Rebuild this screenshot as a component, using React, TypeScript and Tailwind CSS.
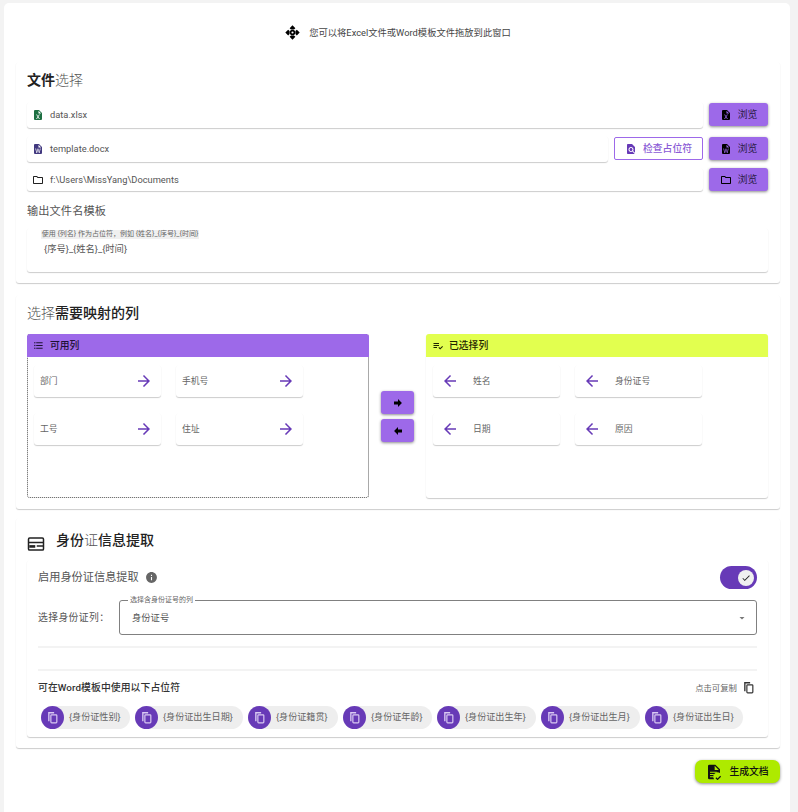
import React from 'react'
import {
  MdArrowBack,
  MdArrowForward,
  MdArrowDropDown,
  MdCheck,
  MdFindInPage,
  MdFormatListBulleted,
  MdInfo,
  MdOutlineFolder,
  MdPlaylistAddCheck,
} from 'react-icons/md'

const EXCEL =
  'M14,2H6A2,2 0 0,0 4,4V20A2,2 0 0,0 6,22H18A2,2 0 0,0 20,20V8L14,2M15.8,20H14L12,16.6L10,20H8.2L11.1,15.5L8.2,11H10L12,14.4L14,11H15.8L12.9,15.5L15.8,20M13,9V3.5L18.5,9H13Z'
const WORD =
  'M14,2H6A2,2 0 0,0 4,4V20A2,2 0 0,0 6,22H18A2,2 0 0,0 20,20V8L14,2M15.2,20H13.8L12,13.2L10.2,20H8.8L6.6,11H8.1L9.5,17.8L11.3,11H12.6L14.4,17.8L15.8,11H17.3L15.2,20M13,9V3.5L18.5,9H13Z'

const MdiIcon: React.FC<{ d: string; className?: string }> = ({ d, className }) => (
  <svg viewBox="0 0 24 24" fill="currentColor" className={className}>
    <path d={d} />
  </svg>
)

const DragIcon: React.FC<{ className?: string }> = ({ className }) => (
  <svg viewBox="0 0 24 24" fill="currentColor" className={className}>
    <path d="M12 0.5l4.6 4.6-2.2 2.2h-4.8L7.4 5.1zM12 23.5l-4.6-4.6 2.2-2.2h4.8l2.2 2.2zM0.5 12l4.6-4.6 2.2 2.2v4.8l-2.2 2.2zM23.5 12l-4.6 4.6-2.2-2.2V9.600l2.2-2.200z" />
    <path
      fillRule="evenodd"
      d="M12 7.500a4.500 4.500 0 1 1 0 9 4.500 4.500 0 0 1 0-9m0 2.800a1.700 1.700 0 1 0 0 3.400 1.700 1.700 0 0 0 0-3.400"
    />
  </svg>
)

const CopyIcon: React.FC<{ className?: string }> = ({ className }) => (
  <svg viewBox="0 0 24 24" fill="none" className={className}>
    <path d="M4 2h11v2.500H6.500V19H4z" fill="currentColor" />
    <rect x="9" y="7" width="11" height="15" rx="1.500" stroke="currentColor" strokeWidth="2.200" />
  </svg>
)

const IdIcon: React.FC<{ className?: string }> = ({ className }) => (
  <svg viewBox="0 0 24 24" fill="none" className={className}>
    <rect x="2" y="4" width="20" height="16" rx="1.500" stroke="currentColor" strokeWidth="2" />
    <path d="M2 10h20M13 14.500h9" stroke="currentColor" strokeWidth="2" />
    <path d="M3 13.500h8v3.500H3z" fill="currentColor" />
  </svg>
)

const FileCheckIcon: React.FC<{ className?: string }> = ({ className }) => (
  <svg viewBox="0 0 24 24" fill="currentColor" className={className}>
    <path d="M5 1h9l7 7v5.500a6.500 6.500 0 0 0-8.600 9.500H5a2 2 0 0 1-2-2V3a2 2 0 0 1 2-2m8 1.800V9h6.200zM6 11.500V13h10v-1.500zm0 3.500v1.500h6V15zm0 3.500V20h5v-1.500z" />
    <path d="M15.500 20l1.800 1.800 4-4 1.300 1.300-5.300 5.300-3.100-3.100z" />
  </svg>
)

const BrowseButton: React.FC<{ icon: React.ReactNode; className?: string }> = ({ icon, className }) => (
  <button className={`flex h-[23px] w-[59px] shrink-0 items-center justify-center gap-[6px] rounded-[3px] bg-[#9d69e9] text-[9.8px] text-[#2a1a45] shadow-[0_1px_3px_rgba(0,0,0,0.45)] ${className ?? ''}`}>
    {icon}
    <span className="pt-[1px]">浏览</span>
  </button>
)

const FileRow: React.FC<{ icon: React.ReactNode; text: string; className: string }> = ({ icon, text, className }) => (
  <div className={`flex flex-1 items-center gap-[6px] rounded-[3px] pl-[5px] text-[9.3px] text-[#555] shadow-[0_1px_1px_rgba(0,0,0,0.2)] ${className}`}>
    {icon}
    <span>{text}</span>
  </div>
)

const ColumnItem: React.FC<{ name: string; side: 'left' | 'right' }> = ({ name, side }) => (
  <div className="flex h-[32px] w-[127px] items-center rounded-[3px] bg-white text-[8.8px] text-[#666] shadow-[0_1px_1px_rgba(0,0,0,0.2)]">
    {side === 'left' ? (
      <>
        <span className="ml-[6px] flex-1 pt-[1px]">{name}</span>
        <MdArrowForward className="mr-[8px] h-[18px] w-[18px] text-[#673ab7]" />
      </>
    ) : (
      <>
        <MdArrowBack className="ml-[8px] h-[18px] w-[18px] text-[#673ab7]" />
        <span className="ml-[14px] pt-[1px]">{name}</span>
      </>
    )}
  </div>
)

const Chip: React.FC<{ label: string; width: string }> = ({ label, width }) => (
  <div className={`flex h-[23px] items-center rounded-full bg-[#eeeeee] text-[9.1px] text-[#666] ${width}`}>
    <span className="flex h-[23px] w-[23px] shrink-0 items-center justify-center rounded-full bg-[#673ab7] text-[#d9c9f2]">
      <CopyIcon className="h-[13px] w-[13px]" />
    </span>
    <span className="ml-[5px] whitespace-nowrap">{label}</span>
  </div>
)

export default function App() {
  return (
    <div className="h-[812px] w-[798px] overflow-hidden bg-[#f3f3f3] pl-[4px] pt-[3px] font-['Roboto','Noto_Sans_CJK_SC',sans-serif]">
      <div className="h-[809px] w-[786px] rounded-t-[5px] bg-white pl-[12px] pr-[10px]">
        {/* Drop hint */}
        <div className="flex h-[59px] items-center justify-center text-[9.3px] text-[#444]">
          <DragIcon className="mr-[9px] h-[15px] w-[15px] text-black" />
          <span>您可以将Excel文件或Word模板文件拖放到此窗口</span>
        </div>

        {/* File selection */}
        <section className="h-[221px] rounded-[3px] bg-white px-[11px] pr-[12px] shadow-[0_1px_1px_rgba(0,0,0,0.2)]">
          <h2 className="flex h-[36px] items-center text-[14px] leading-none text-[#555] font-light">
            <span className="font-semibold text-[#222]">文件</span>选择
          </h2>
          <div className="flex h-[26px] items-start gap-[6px] mt-[4px]">
            <FileRow
              className="h-[26px]"
              icon={<MdiIcon d={EXCEL} className="h-[12px] w-[12px] text-[#1d6f42]" />}
              text="data.xlsx"
            />
            <BrowseButton className="mt-[1px]" icon={<MdiIcon d={EXCEL} className="h-[12px] w-[12px] text-black" />} />
          </div>
          <div className="mt-[8px] flex h-[26px] items-start gap-[6px]">
            <FileRow
              className="h-[26px]"
              icon={<MdiIcon d={WORD} className="h-[12px] w-[12px] text-[#41387f]" />}
              text="template.docx"
            />
            <button className="mt-[1px] flex h-[23px] w-[89px] shrink-0 items-center justify-center gap-[6px] rounded-[2px] border border-[#9d69e9] bg-white text-[9.8px] font-medium text-[#8a5bd6]">
              <MdFindInPage className="h-[12px] w-[12px] text-[#673ab7]" />
              <span className="pt-[1px]">检查占位符</span>
            </button>
            <BrowseButton className="mt-[1px]" icon={<MdiIcon d={WORD} className="h-[12px] w-[12px] text-black" />} />
          </div>
          <div className="mt-[6px] flex h-[23px] items-start gap-[6px]">
            <FileRow
              className="h-[23px]"
              icon={<MdOutlineFolder className="h-[12px] w-[12px] text-[#222]" />}
              text="f:\Users\MissYang\Documents"
            />
            <BrowseButton icon={<MdOutlineFolder className="h-[12px] w-[12px] text-black" />} />
          </div>
          <div className="mt-[13px] text-[11.2px] leading-[16px] tracking-[0.1px] text-[#555]">输出文件名模板</div>
          <div className="mt-[8px] h-[44px] rounded-[3px] pl-[14px] pt-[2px] shadow-[0_1px_1px_rgba(0,0,0,0.2)]">
            <div className="flex h-[9px] w-[158px] items-center justify-center bg-[#f0f0f0] text-[7px] leading-none whitespace-nowrap text-[#666]">
              使用 {'{列名}'} 作为占位符，例如 {'{姓名}_{序号}_{时间}'}
            </div>
            <div className="mt-[3px] pl-[3px] text-[9.3px] leading-[14px] text-[#555]">{'{序号}_{姓名}_{时间}'}</div>
          </div>
        </section>

        {/* Column mapping */}
        <section className="mt-[12px] h-[214px] rounded-[3px] bg-white px-[11px] pr-[12px] shadow-[0_1px_1px_rgba(0,0,0,0.2)]">
          <h2 className="flex h-[36px] items-center text-[14px] leading-none font-light text-[#555]">
            选择<span className="font-medium text-[#222]">需要映射的列</span>
          </h2>
          <div className="mt-[3px] flex items-center">
            <div className="h-[164px] w-[342px] rounded-[3px] border border-dotted border-[#555]">
              <div className="-m-px flex h-[23px] items-center gap-[6px] rounded-t-[3px] bg-[#9d69e9] pl-[6px] text-[9.8px] font-medium text-[#1e1233]">
                <MdFormatListBulleted className="h-[11px] w-[11px]" />
                <span className="pt-[1px]">可用列</span>
              </div>
              <div className="mt-[9px] grid grid-cols-[127px_126px] gap-x-[15px] gap-y-[16px] pl-[6px]">
                <ColumnItem name="部门" side="left" />
                <ColumnItem name="手机号" side="left" />
                <ColumnItem name="工号" side="left" />
                <ColumnItem name="住址" side="left" />
              </div>
            </div>
            <div className="flex w-[57px] flex-col items-center gap-[5px] pt-[1px]">
              <button className="flex h-[23px] w-[33px] items-center justify-center rounded-[3px] bg-[#9d69e9] shadow-[0_1px_3px_rgba(0,0,0,0.45)]">
                <MdiIcon d="M4,15V9H12V4.16L19.84,12L12,19.84V15H4Z" className="h-[12px] w-[12px] text-black" />
              </button>
              <button className="flex h-[23px] w-[33px] items-center justify-center rounded-[3px] bg-[#9d69e9] shadow-[0_1px_3px_rgba(0,0,0,0.45)]">
                <MdiIcon d="M20,9V15H12V19.84L4.16,12L12,4.16V9H20Z" className="h-[12px] w-[12px] text-black" />
              </button>
            </div>
            <div className="h-[164px] w-[342px] rounded-[3px] bg-white shadow-[0_1px_1px_rgba(0,0,0,0.2)]">
              <div className="flex h-[23px] items-center gap-[5px] rounded-t-[3px] bg-[#e2ff4f] pl-[6px] text-[9.8px] font-medium text-[#1f2400]">
                <MdPlaylistAddCheck className="h-[12px] w-[12px]" />
                <span className="pt-[1px]">已选择列</span>
              </div>
              <div className="mt-[8px] grid grid-cols-[127px_126px] gap-x-[15px] gap-y-[16px] pl-[7px]">
                <ColumnItem name="姓名" side="right" />
                <ColumnItem name="身份证号" side="right" />
                <ColumnItem name="日期" side="right" />
                <ColumnItem name="原因" side="right" />
              </div>
            </div>
          </div>
        </section>

        {/* ID card extraction */}
        <section className="mt-[9px] h-[230px] rounded-[3px] bg-white px-[11px] pr-[12px] shadow-[0_1px_1px_rgba(0,0,0,0.2)]">
          <div className="flex h-[42px] items-center">
            <IdIcon className="mt-[9px] h-[18px] w-[18px] text-[#222]" />
            <h2 className="ml-[11px] pt-[1px] text-[14px] leading-none font-medium text-[#222]">
              身份<span className="font-light text-[#555]">证</span>信息提取
            </h2>
          </div>
          <div className="h-[177px] rounded-[3px] px-[11px] shadow-[0_1px_1px_rgba(0,0,0,0.2)]">
            <div className="flex h-[34px] items-center justify-between pt-[1px]">
              <div className="flex items-center gap-[6px] text-[11.2px] text-[#555]">
                <span className="pt-[1px]">启用身份证信息提取</span>
                <MdInfo className="h-[13px] w-[13px] text-[#666]" />
              </div>
              <div className="flex h-[23px] w-[37px] items-center justify-end rounded-full bg-[#673ab7] pr-[3px]">
                <span className="flex h-[16px] w-[16px] items-center justify-center rounded-full bg-[#f0f0f0]">
                  <MdCheck className="h-[10px] w-[10px] text-[#222]" />
                </span>
              </div>
            </div>
            <div className="mt-[6px] flex items-center">
              <span className="w-[81px] pt-[2px] text-[9.8px] tracking-[0.4px] text-[#555]">选择身份证列：</span>
              <div className="relative flex h-[35px] flex-1 items-center justify-between rounded-[3px] border border-[#808080] pl-[12px] pr-[8px] text-[9.3px] text-[#555]">
                <span className="absolute -top-[5px] left-[8px] bg-white px-[2px] text-[7px] leading-[8px] text-[#666]">选择含身份证号的列</span>
                <span className="pt-[1px]">身份证号</span>
                <MdArrowDropDown className="h-[12px] w-[12px] text-[#777]" />
              </div>
            </div>
            <div className="mt-[11px] h-[2px] bg-[#f3f3f3]" />
            <div className="mt-[21px] h-[2px] bg-[#f3f3f3]" />
            <div className="mt-[9px] flex h-[16px] items-center justify-between pr-[2px]">
              <span className="text-[9.8px] font-medium tracking-[0.1px] text-[#333]">可在Word模板中使用以下占位符</span>
              <div className="flex items-center gap-[5px] text-[8.4px] text-[#666]">
                <span className="pt-[1px]">点击可复制</span>
                <CopyIcon className="h-[13px] w-[13px] text-[#333]" />
              </div>
            </div>
            <div className="mt-[10px] flex gap-[5px] pl-[3px]">
              <Chip label="{身份证性别}" width="w-[89px]" />
              <Chip label="{身份证出生日期}" width="w-[108px]" />
              <Chip label="{身份证籍贯}" width="w-[90px]" />
              <Chip label="{身份证年龄}" width="w-[89px]" />
              <Chip label="{身份证出生年}" width="w-[99px]" />
              <Chip label="{身份证出生月}" width="w-[99px]" />
              <Chip label="{身份证出生日}" width="w-[98px]" />
            </div>
          </div>
        </section>

        {/* Generate */}
        <div className="mt-[12px] flex justify-end">
          <button className="flex h-[23px] w-[85px] items-center justify-center gap-[7px] rounded-[7px] bg-[#aeea00] text-[9.8px] font-medium text-[#111] shadow-[0_1px_3px_rgba(0,0,0,0.45)]">
            <FileCheckIcon className="h-[16px] w-[16px]" />
            <span className="pt-[1px]">生成文档</span>
          </button>
        </div>
      </div>
    </div>
  )
}
